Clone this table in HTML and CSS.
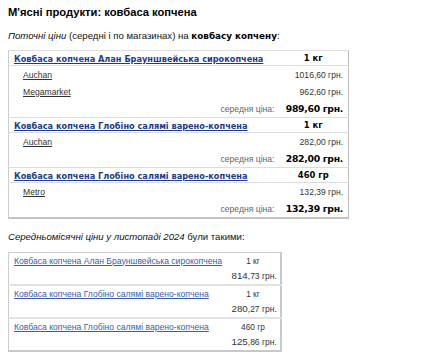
FILE: index.html
```html
<!DOCTYPE html>
<html lang="uk">
<head>
<meta charset="utf-8">
<title>М'ясні продукти: ковбаса копчена</title>
<link rel="stylesheet" href="styles.css">
</head>
<body>
<div class="page">
  <h1 class="title">М'ясні продукти: ковбаса копчена</h1>
  <p class="intro"><i>Поточні ціни</i> (середні і по магазинах) на <b>ковбасу копчену</b>:</p>

  <table class="current">
    <colgroup><col class="c-name"><col class="c-val"></colgroup>
    <tbody>
      <tr class="head"><td><a href="#">Ковбаса копчена Алан Брауншвейська сирокопчена</a></td><td class="unit">1 кг</td></tr>
      <tr class="shop"><td><a href="#">Auchan</a></td><td class="price">1016<small>,60 грн.</small></td></tr>
      <tr class="shop"><td><a href="#">Megamarket</a></td><td class="price">962<small>,60 грн.</small></td></tr>
      <tr class="avg"><td class="avg-label">середня ціна:</td><td class="avg-price">989,60 грн.</td></tr>

      <tr class="head"><td><a href="#">Ковбаса копчена Глобіно салямі варено-копчена</a></td><td class="unit">1 кг</td></tr>
      <tr class="shop"><td><a href="#">Auchan</a></td><td class="price">282<small>,00 грн.</small></td></tr>
      <tr class="avg"><td class="avg-label">середня ціна:</td><td class="avg-price">282,00 грн.</td></tr>

      <tr class="head"><td><a href="#">Ковбаса копчена Глобіно салямі варено-копчена</a></td><td class="unit">460 гр</td></tr>
      <tr class="shop"><td><a href="#">Metro</a></td><td class="price">132<small>,39 грн.</small></td></tr>
      <tr class="avg"><td class="avg-label">середня ціна:</td><td class="avg-price">132,39 грн.</td></tr>
    </tbody>
  </table>

  <p class="intro monthly"><i>Середньомісячні ціни у листопаді 2024</i> були такими:</p>

  <table class="month">
    <colgroup><col class="m-name"><col class="m-val"></colgroup>
    <tbody>
      <tr class="m-top"><td><a href="#">Ковбаса копчена Алан Брауншвейська сирокопчена</a></td><td class="m-unit">1 кг</td></tr>
      <tr class="m-bot"><td></td><td class="m-price">814<small>,73 грн.</small></td></tr>
      <tr class="m-top"><td><a href="#">Ковбаса копчена Глобіно салямі варено-копчена</a></td><td class="m-unit">1 кг</td></tr>
      <tr class="m-bot"><td></td><td class="m-price">280<small>,27 грн.</small></td></tr>
      <tr class="m-top"><td><a href="#">Ковбаса копчена Глобіно салямі варено-копчена</a></td><td class="m-unit">460 гр</td></tr>
      <tr class="m-bot"><td></td><td class="m-price">125<small>,86 грн.</small></td></tr>
    </tbody>
  </table>
</div>
</body>
</html>
```
FILE: styles.css
```css
html, body {
  margin: 0;
  padding: 0;
  background: #fff;
}
.page {
  padding: 5px 8px;
  font-family: "Liberation Sans", Arial, sans-serif;
  color: #000;
  white-space: nowrap;
}
.title {
  margin: 0;
  font-size: 11.2px;
  line-height: 14px;
  font-weight: bold;
}
.intro {
  margin: 11px 0 0;
  font-size: 9.6px;
  line-height: 12px;
  color: #111;
}
.intro b {
  font-family: "DejaVu Sans", Verdana, sans-serif;
  font-size: 8.8px;
  color: #000;
}

/* current prices */
.current {
  margin-top: 8px;
  width: 340px;
  table-layout: fixed;
  border-collapse: collapse;
  border: 1px solid #ccc;
  border-right-color: #bbb;
  border-bottom: 2px solid #c4c4c4;
}
.c-name { width: 270px; }
.c-val { width: 70px; }
.current td {
  padding: 0 5px;
  line-height: 12px;
  vertical-align: middle;
}
.head td {
  height: 14px;
  border-top: 1px solid #ddd;
  border-bottom: 1px solid #ddd;
}
.head a {
  font-family: "DejaVu Sans", Verdana, sans-serif;
  font-weight: bold;
  font-size: 8.2px;
  color: #1b3c8c;
  text-decoration: underline;
}
.unit {
  text-align: center;
  font-family: "DejaVu Sans", Verdana, sans-serif;
  font-weight: bold;
  font-size: 8.4px;
}
.shop td {
  height: 17px;
  font-size: 8.6px;
}
.shop td:first-child {
  padding-left: 14px;
}
.shop a {
  color: #333;
  text-decoration: underline;
}
.price {
  text-align: right;
  font-size: 9.75px;
  color: #333;
}
.price small, .m-price small {
  font-size: 8.5px;
}
.avg td {
  height: 17px;
}
.avg-label {
  text-align: right;
  font-size: 8.6px;
  color: #666;
}
.current .avg-label {
  padding-right: 4px;
}
.avg-price {
  text-align: right;
  font-family: "DejaVu Sans", Verdana, sans-serif;
  font-weight: bold;
  font-size: 9.3px;
  letter-spacing: -0.3px;
}

.monthly {
  margin-top: 12px;
}

/* monthly table */
.month {
  margin-top: 9px;
  width: 272px;
  table-layout: fixed;
  border-collapse: collapse;
  border: 1px solid #ccc;
  border-right: 2px solid #c8c8c8;
  border-bottom: 2px solid #c8c8c8;
  font-size: 8.6px;
}
.m-name { width: 218px; }
.m-val { width: 54px; }
.month td {
  padding: 0 5px;
  line-height: 12px;
  vertical-align: middle;
}
.m-top td {
  height: 15px;
  border-top: 2px solid #e2e2e2;
}
.m-top:first-child td {
  border-top: 0;
}
.m-bot td {
  height: 16px;
}
.month a {
  color: #3a5dae;
  text-decoration: underline;
}
.m-unit {
  text-align: center;
  color: #333;
  font-size: 8.3px;
}
.m-price {
  text-align: right;
  font-size: 9.75px;
  color: #333;
}
```
